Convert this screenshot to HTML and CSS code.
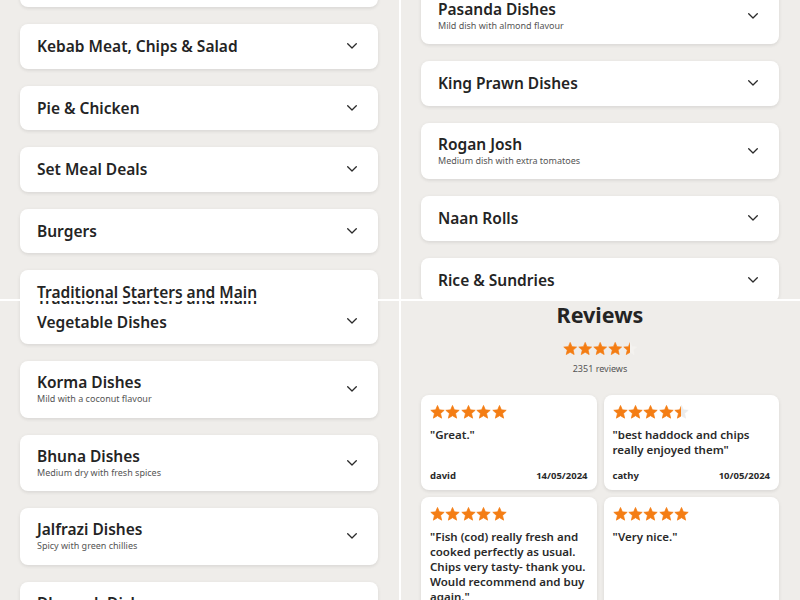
FILE: index.html
```html
<!DOCTYPE html>
<html lang="en">
<head>
<meta charset="utf-8">
<title>Menu and reviews</title>
<link rel="stylesheet" href="styles.css">
</head>
<body>
<main class="screens">

  <section class="screen">
    <div class="menu-list list-tl">
      <div class="card card-blank"></div>
      <div class="card">
        <div class="card-text"><h3 class="card-title">Kebab Meat, Chips &amp; Salad</h3></div>
        <span class="chev"><svg width="10" height="6" viewBox="0 0 10 6"><path d="M0.7 0.7 L5 5 L9.3 0.7" fill="none" stroke="#2a2a2a" stroke-width="1.3" stroke-linecap="round" stroke-linejoin="round"/></svg></span>
      </div>
      <div class="card">
        <div class="card-text"><h3 class="card-title">Pie &amp; Chicken</h3></div>
        <span class="chev"><svg width="10" height="6" viewBox="0 0 10 6"><path d="M0.7 0.7 L5 5 L9.3 0.7" fill="none" stroke="#2a2a2a" stroke-width="1.3" stroke-linecap="round" stroke-linejoin="round"/></svg></span>
      </div>
      <div class="card">
        <div class="card-text"><h3 class="card-title">Set Meal Deals</h3></div>
        <span class="chev"><svg width="10" height="6" viewBox="0 0 10 6"><path d="M0.7 0.7 L5 5 L9.3 0.7" fill="none" stroke="#2a2a2a" stroke-width="1.3" stroke-linecap="round" stroke-linejoin="round"/></svg></span>
      </div>
      <div class="card">
        <div class="card-text"><h3 class="card-title">Burgers</h3></div>
        <span class="chev"><svg width="10" height="6" viewBox="0 0 10 6"><path d="M0.7 0.7 L5 5 L9.3 0.7" fill="none" stroke="#2a2a2a" stroke-width="1.3" stroke-linecap="round" stroke-linejoin="round"/></svg></span>
      </div>
      <div class="card">
        <div class="card-text"><h3 class="card-title">Traditional Starters and Main Vegetable Dishes</h3></div>
        <span class="chev chev-end"><svg width="10" height="6" viewBox="0 0 10 6"><path d="M0.7 0.7 L5 5 L9.3 0.7" fill="none" stroke="#2a2a2a" stroke-width="1.3" stroke-linecap="round" stroke-linejoin="round"/></svg></span>
      </div>
    </div>
  </section>

  <section class="screen">
    <div class="menu-list list-tr">
      <div class="card">
        <div class="card-text sub"><h3 class="card-title">Pasanda Dishes</h3><p class="card-desc">Mild dish with almond flavour</p></div>
        <span class="chev"><svg width="10" height="6" viewBox="0 0 10 6"><path d="M0.7 0.7 L5 5 L9.3 0.7" fill="none" stroke="#2a2a2a" stroke-width="1.3" stroke-linecap="round" stroke-linejoin="round"/></svg></span>
      </div>
      <div class="card">
        <div class="card-text"><h3 class="card-title">King Prawn Dishes</h3></div>
        <span class="chev"><svg width="10" height="6" viewBox="0 0 10 6"><path d="M0.7 0.7 L5 5 L9.3 0.7" fill="none" stroke="#2a2a2a" stroke-width="1.3" stroke-linecap="round" stroke-linejoin="round"/></svg></span>
      </div>
      <div class="card">
        <div class="card-text sub"><h3 class="card-title">Rogan Josh</h3><p class="card-desc">Medium dish with extra tomatoes</p></div>
        <span class="chev"><svg width="10" height="6" viewBox="0 0 10 6"><path d="M0.7 0.7 L5 5 L9.3 0.7" fill="none" stroke="#2a2a2a" stroke-width="1.3" stroke-linecap="round" stroke-linejoin="round"/></svg></span>
      </div>
      <div class="card">
        <div class="card-text"><h3 class="card-title">Naan Rolls</h3></div>
        <span class="chev"><svg width="10" height="6" viewBox="0 0 10 6"><path d="M0.7 0.7 L5 5 L9.3 0.7" fill="none" stroke="#2a2a2a" stroke-width="1.3" stroke-linecap="round" stroke-linejoin="round"/></svg></span>
      </div>
      <div class="card">
        <div class="card-text"><h3 class="card-title">Rice &amp; Sundries</h3></div>
        <span class="chev"><svg width="10" height="6" viewBox="0 0 10 6"><path d="M0.7 0.7 L5 5 L9.3 0.7" fill="none" stroke="#2a2a2a" stroke-width="1.3" stroke-linecap="round" stroke-linejoin="round"/></svg></span>
      </div>
    </div>
  </section>

  <section class="screen">
    <div class="menu-list list-bl">
      <div class="card">
        <div class="card-text"><h3 class="card-title">Traditional Starters and Main Vegetable Dishes</h3></div>
        <span class="chev chev-end"><svg width="10" height="6" viewBox="0 0 10 6"><path d="M0.7 0.7 L5 5 L9.3 0.7" fill="none" stroke="#2a2a2a" stroke-width="1.3" stroke-linecap="round" stroke-linejoin="round"/></svg></span>
      </div>
      <div class="card">
        <div class="card-text sub"><h3 class="card-title">Korma Dishes</h3><p class="card-desc">Mild with a coconut flavour</p></div>
        <span class="chev"><svg width="10" height="6" viewBox="0 0 10 6"><path d="M0.7 0.7 L5 5 L9.3 0.7" fill="none" stroke="#2a2a2a" stroke-width="1.3" stroke-linecap="round" stroke-linejoin="round"/></svg></span>
      </div>
      <div class="card">
        <div class="card-text sub"><h3 class="card-title">Bhuna Dishes</h3><p class="card-desc">Medium dry with fresh spices</p></div>
        <span class="chev"><svg width="10" height="6" viewBox="0 0 10 6"><path d="M0.7 0.7 L5 5 L9.3 0.7" fill="none" stroke="#2a2a2a" stroke-width="1.3" stroke-linecap="round" stroke-linejoin="round"/></svg></span>
      </div>
      <div class="card">
        <div class="card-text sub"><h3 class="card-title">Jalfrazi Dishes</h3><p class="card-desc">Spicy with green chillies</p></div>
        <span class="chev"><svg width="10" height="6" viewBox="0 0 10 6"><path d="M0.7 0.7 L5 5 L9.3 0.7" fill="none" stroke="#2a2a2a" stroke-width="1.3" stroke-linecap="round" stroke-linejoin="round"/></svg></span>
      </div>
      <div class="card">
        <div class="card-text sub"><h3 class="card-title">Dhansak Dishes</h3><p class="card-desc">&nbsp;</p></div>
        <span class="chev"><svg width="10" height="6" viewBox="0 0 10 6"><path d="M0.7 0.7 L5 5 L9.3 0.7" fill="none" stroke="#2a2a2a" stroke-width="1.3" stroke-linecap="round" stroke-linejoin="round"/></svg></span>
      </div>
    </div>
  </section>

  <section class="screen">
    <div class="reviews">
      <h2 class="reviews-title">Reviews</h2>
      <div class="rating">
        <svg class="star-lg" viewBox="-0.6 -0.6 21.2 19.3"><path d="M10 0 L12.7 6.28 L19.51 6.91 L14.37 11.42 L15.88 18.09 L10 14.6 L4.12 18.09 L5.63 11.42 L0.49 6.91 L7.3 6.28 Z" fill="#f47d14" stroke="#f47d14" stroke-width="1" stroke-linejoin="round"/></svg>
        <svg class="star-lg" viewBox="-0.6 -0.6 21.2 19.3"><path d="M10 0 L12.7 6.28 L19.51 6.91 L14.37 11.42 L15.88 18.09 L10 14.6 L4.12 18.09 L5.63 11.42 L0.49 6.91 L7.3 6.28 Z" fill="#f47d14" stroke="#f47d14" stroke-width="1" stroke-linejoin="round"/></svg>
        <svg class="star-lg" viewBox="-0.6 -0.6 21.2 19.3"><path d="M10 0 L12.7 6.28 L19.51 6.91 L14.37 11.42 L15.88 18.09 L10 14.6 L4.12 18.09 L5.63 11.42 L0.49 6.91 L7.3 6.28 Z" fill="#f47d14" stroke="#f47d14" stroke-width="1" stroke-linejoin="round"/></svg>
        <svg class="star-lg" viewBox="-0.6 -0.6 21.2 19.3"><path d="M10 0 L12.7 6.28 L19.51 6.91 L14.37 11.42 L15.88 18.09 L10 14.6 L4.12 18.09 L5.63 11.42 L0.49 6.91 L7.3 6.28 Z" fill="#f47d14" stroke="#f47d14" stroke-width="1" stroke-linejoin="round"/></svg>
        <svg class="star-lg" viewBox="-0.6 -0.6 21.2 19.3"><defs><linearGradient id="halfA" x1="0" x2="1" y1="0" y2="0"><stop offset="0.5" stop-color="#f47d14"/><stop offset="0.5" stop-color="#f4f2ef"/></linearGradient></defs><path d="M10 0 L12.7 6.28 L19.51 6.91 L14.37 11.42 L15.88 18.09 L10 14.6 L4.12 18.09 L5.63 11.42 L0.49 6.91 L7.3 6.28 Z" fill="url(#halfA)" stroke="url(#halfA)" stroke-width="1" stroke-linejoin="round"/></svg>
      </div>
      <p class="review-count">2351 reviews</p>

      <div class="review-grid">
        <article class="review">
          <div class="review-stars">
            <svg class="star-sm" viewBox="-0.6 -0.6 21.2 19.3"><path d="M10 0 L12.7 6.28 L19.51 6.91 L14.37 11.42 L15.88 18.09 L10 14.6 L4.12 18.09 L5.63 11.42 L0.49 6.91 L7.3 6.28 Z" fill="#f47d14" stroke="#f47d14" stroke-width="1" stroke-linejoin="round"/></svg>
            <svg class="star-sm" viewBox="-0.6 -0.6 21.2 19.3"><path d="M10 0 L12.7 6.28 L19.51 6.91 L14.37 11.42 L15.88 18.09 L10 14.6 L4.12 18.09 L5.63 11.42 L0.49 6.91 L7.3 6.28 Z" fill="#f47d14" stroke="#f47d14" stroke-width="1" stroke-linejoin="round"/></svg>
            <svg class="star-sm" viewBox="-0.6 -0.6 21.2 19.3"><path d="M10 0 L12.7 6.28 L19.51 6.91 L14.37 11.42 L15.88 18.09 L10 14.6 L4.12 18.09 L5.63 11.42 L0.49 6.91 L7.3 6.28 Z" fill="#f47d14" stroke="#f47d14" stroke-width="1" stroke-linejoin="round"/></svg>
            <svg class="star-sm" viewBox="-0.6 -0.6 21.2 19.3"><path d="M10 0 L12.7 6.28 L19.51 6.91 L14.37 11.42 L15.88 18.09 L10 14.6 L4.12 18.09 L5.63 11.42 L0.49 6.91 L7.3 6.28 Z" fill="#f47d14" stroke="#f47d14" stroke-width="1" stroke-linejoin="round"/></svg>
            <svg class="star-sm" viewBox="-0.6 -0.6 21.2 19.3"><path d="M10 0 L12.7 6.28 L19.51 6.91 L14.37 11.42 L15.88 18.09 L10 14.6 L4.12 18.09 L5.63 11.42 L0.49 6.91 L7.3 6.28 Z" fill="#f47d14" stroke="#f47d14" stroke-width="1" stroke-linejoin="round"/></svg>
          </div>
          <p class="review-text">"Great."</p>
          <div class="review-meta"><span>david</span><span>14/05/2024</span></div>
        </article>

        <article class="review">
          <div class="review-stars">
            <svg class="star-sm" viewBox="-0.6 -0.6 21.2 19.3"><path d="M10 0 L12.7 6.28 L19.51 6.91 L14.37 11.42 L15.88 18.09 L10 14.6 L4.12 18.09 L5.63 11.42 L0.49 6.91 L7.3 6.28 Z" fill="#f47d14" stroke="#f47d14" stroke-width="1" stroke-linejoin="round"/></svg>
            <svg class="star-sm" viewBox="-0.6 -0.6 21.2 19.3"><path d="M10 0 L12.7 6.28 L19.51 6.91 L14.37 11.42 L15.88 18.09 L10 14.6 L4.12 18.09 L5.63 11.42 L0.49 6.91 L7.3 6.28 Z" fill="#f47d14" stroke="#f47d14" stroke-width="1" stroke-linejoin="round"/></svg>
            <svg class="star-sm" viewBox="-0.6 -0.6 21.2 19.3"><path d="M10 0 L12.7 6.28 L19.51 6.91 L14.37 11.42 L15.88 18.09 L10 14.6 L4.12 18.09 L5.63 11.42 L0.49 6.91 L7.3 6.28 Z" fill="#f47d14" stroke="#f47d14" stroke-width="1" stroke-linejoin="round"/></svg>
            <svg class="star-sm" viewBox="-0.6 -0.6 21.2 19.3"><path d="M10 0 L12.7 6.28 L19.51 6.91 L14.37 11.42 L15.88 18.09 L10 14.6 L4.12 18.09 L5.63 11.42 L0.49 6.91 L7.3 6.28 Z" fill="#f47d14" stroke="#f47d14" stroke-width="1" stroke-linejoin="round"/></svg>
            <svg class="star-sm" viewBox="-0.6 -0.6 21.2 19.3"><defs><linearGradient id="halfB" x1="0" x2="1" y1="0" y2="0"><stop offset="0.5" stop-color="#f47d14"/><stop offset="0.5" stop-color="#ececec"/></linearGradient></defs><path d="M10 0 L12.7 6.28 L19.51 6.91 L14.37 11.42 L15.88 18.09 L10 14.6 L4.12 18.09 L5.63 11.42 L0.49 6.91 L7.3 6.28 Z" fill="url(#halfB)" stroke="url(#halfB)" stroke-width="1" stroke-linejoin="round"/></svg>
          </div>
          <p class="review-text">"best haddock and chips really enjoyed them"</p>
          <div class="review-meta"><span>cathy</span><span>10/05/2024</span></div>
        </article>

        <article class="review">
          <div class="review-stars">
            <svg class="star-sm" viewBox="-0.6 -0.6 21.2 19.3"><path d="M10 0 L12.7 6.28 L19.51 6.91 L14.37 11.42 L15.88 18.09 L10 14.6 L4.12 18.09 L5.63 11.42 L0.49 6.91 L7.3 6.28 Z" fill="#f47d14" stroke="#f47d14" stroke-width="1" stroke-linejoin="round"/></svg>
            <svg class="star-sm" viewBox="-0.6 -0.6 21.2 19.3"><path d="M10 0 L12.7 6.28 L19.51 6.91 L14.37 11.42 L15.88 18.09 L10 14.6 L4.12 18.09 L5.63 11.42 L0.49 6.91 L7.3 6.28 Z" fill="#f47d14" stroke="#f47d14" stroke-width="1" stroke-linejoin="round"/></svg>
            <svg class="star-sm" viewBox="-0.6 -0.6 21.2 19.3"><path d="M10 0 L12.7 6.28 L19.51 6.91 L14.37 11.42 L15.88 18.09 L10 14.6 L4.12 18.09 L5.63 11.42 L0.49 6.91 L7.3 6.28 Z" fill="#f47d14" stroke="#f47d14" stroke-width="1" stroke-linejoin="round"/></svg>
            <svg class="star-sm" viewBox="-0.6 -0.6 21.2 19.3"><path d="M10 0 L12.7 6.28 L19.51 6.91 L14.37 11.42 L15.88 18.09 L10 14.6 L4.12 18.09 L5.63 11.42 L0.49 6.91 L7.3 6.28 Z" fill="#f47d14" stroke="#f47d14" stroke-width="1" stroke-linejoin="round"/></svg>
            <svg class="star-sm" viewBox="-0.6 -0.6 21.2 19.3"><path d="M10 0 L12.7 6.28 L19.51 6.91 L14.37 11.42 L15.88 18.09 L10 14.6 L4.12 18.09 L5.63 11.42 L0.49 6.91 L7.3 6.28 Z" fill="#f47d14" stroke="#f47d14" stroke-width="1" stroke-linejoin="round"/></svg>
          </div>
          <p class="review-text">"Fish (cod) really fresh and cooked perfectly as usual. Chips very tasty- thank you. Would recommend and buy again."</p>
        </article>

        <article class="review">
          <div class="review-stars">
            <svg class="star-sm" viewBox="-0.6 -0.6 21.2 19.3"><path d="M10 0 L12.7 6.28 L19.51 6.91 L14.37 11.42 L15.88 18.09 L10 14.6 L4.12 18.09 L5.63 11.42 L0.49 6.91 L7.3 6.28 Z" fill="#f47d14" stroke="#f47d14" stroke-width="1" stroke-linejoin="round"/></svg>
            <svg class="star-sm" viewBox="-0.6 -0.6 21.2 19.3"><path d="M10 0 L12.7 6.28 L19.51 6.91 L14.37 11.42 L15.88 18.09 L10 14.6 L4.12 18.09 L5.63 11.42 L0.49 6.91 L7.3 6.28 Z" fill="#f47d14" stroke="#f47d14" stroke-width="1" stroke-linejoin="round"/></svg>
            <svg class="star-sm" viewBox="-0.6 -0.6 21.2 19.3"><path d="M10 0 L12.7 6.28 L19.51 6.91 L14.37 11.42 L15.88 18.09 L10 14.6 L4.12 18.09 L5.63 11.42 L0.49 6.91 L7.3 6.28 Z" fill="#f47d14" stroke="#f47d14" stroke-width="1" stroke-linejoin="round"/></svg>
            <svg class="star-sm" viewBox="-0.6 -0.6 21.2 19.3"><path d="M10 0 L12.7 6.28 L19.51 6.91 L14.37 11.42 L15.88 18.09 L10 14.6 L4.12 18.09 L5.63 11.42 L0.49 6.91 L7.3 6.28 Z" fill="#f47d14" stroke="#f47d14" stroke-width="1" stroke-linejoin="round"/></svg>
            <svg class="star-sm" viewBox="-0.6 -0.6 21.2 19.3"><path d="M10 0 L12.7 6.28 L19.51 6.91 L14.37 11.42 L15.88 18.09 L10 14.6 L4.12 18.09 L5.63 11.42 L0.49 6.91 L7.3 6.28 Z" fill="#f47d14" stroke="#f47d14" stroke-width="1" stroke-linejoin="round"/></svg>
          </div>
          <p class="review-text">"Very nice."</p>
        </article>
      </div>
    </div>
  </section>

</main>
</body>
</html>
```

FILE: styles.css
```css
* {
  box-sizing: border-box;
  margin: 0;
  padding: 0;
}

html, body {
  width: 800px;
  height: 600px;
  overflow: hidden;
  background: #ffffff;
}

body {
  font-family: "Noto Sans", "Open Sans", sans-serif;
  color: #242424;
}

.screens {
  display: grid;
  grid-template-columns: 399px 399px;
  grid-template-rows: 299px 299px;
  gap: 2px;
  width: 800px;
  height: 600px;
}

.screen {
  background: #efedea;
  overflow: hidden;
}

/* menu category lists */
.menu-list {
  display: flex;
  flex-direction: column;
  gap: 17px;
  padding: 0 21px 0 20px;
}

.list-tl { margin-top: -37.5px; }
.list-tr { margin-top: -12.5px; }
.list-bl { margin-top: -25.5px; }

.card {
  background: #ffffff;
  border-radius: 8px;
  box-shadow: 0 1px 4px rgba(0, 0, 0, 0.07), 0 2px 3px rgba(0, 0, 0, 0.03);
  display: flex;
  align-items: center;
  padding-left: 17px;
}

.card-blank {
  height: 44.5px;
}

.card-text {
  flex: 1;
  padding: 10px 20px 10.5px 0;
}

.card-text.sub {
  padding: 11px 20px 12.5px 0;
}

.card-title {
  font-size: 15.5px;
  font-weight: 600;
  line-height: 24px;
  color: #242424;
}

.card-text.sub .card-title {
  line-height: 21px;
}

.card-desc {
  font-size: 9px;
  line-height: 12px;
  color: #555555;
}

.chev {
  width: 52px;
  flex: none;
  display: flex;
  justify-content: center;
  align-items: center;
}

.chev-end {
  align-self: flex-end;
  margin-bottom: 20px;
}

.chev svg {
  display: block;
}

/* reviews */
.reviews {
  display: flex;
  flex-direction: column;
  align-items: center;
  padding: 0 21px 0 20px;
}

.reviews-title {
  font-size: 21.5px;
  font-weight: 700;
  line-height: 28px;
  color: #242424;
}

.rating {
  display: flex;
  gap: 0.5px;
  margin-top: 12.5px;
}

.star-lg {
  display: block;
  width: 14.4px;
  height: 13px;
}

.review-count {
  font-size: 9px;
  line-height: 12px;
  margin-top: 8.5px;
  color: #555555;
}

.review-grid {
  display: grid;
  grid-template-columns: 1fr 1fr;
  gap: 7px;
  width: 100%;
  margin-top: 20px;
}

.review {
  background: #ffffff;
  border-radius: 8px;
  box-shadow: 0 1px 4px rgba(0, 0, 0, 0.07), 0 2px 3px rgba(0, 0, 0, 0.03);
  padding: 10px 5px 7.7px 9px;
  display: flex;
  flex-direction: column;
  min-height: 95px;
}

.review-stars {
  display: flex;
  gap: 0.4px;
}

.star-sm {
  display: block;
  width: 15px;
  height: 13.6px;
}

.review-text {
  font-size: 11.5px;
  font-weight: 600;
  line-height: 15px;
  margin-top: 8.3px;
  color: #2a2a2a;
}

.review-meta {
  display: flex;
  justify-content: space-between;
  margin-top: auto;
  padding-right: 4px;
  font-size: 9.5px;
  font-weight: 700;
  line-height: 12px;
  color: #2a2a2a;
}
```
